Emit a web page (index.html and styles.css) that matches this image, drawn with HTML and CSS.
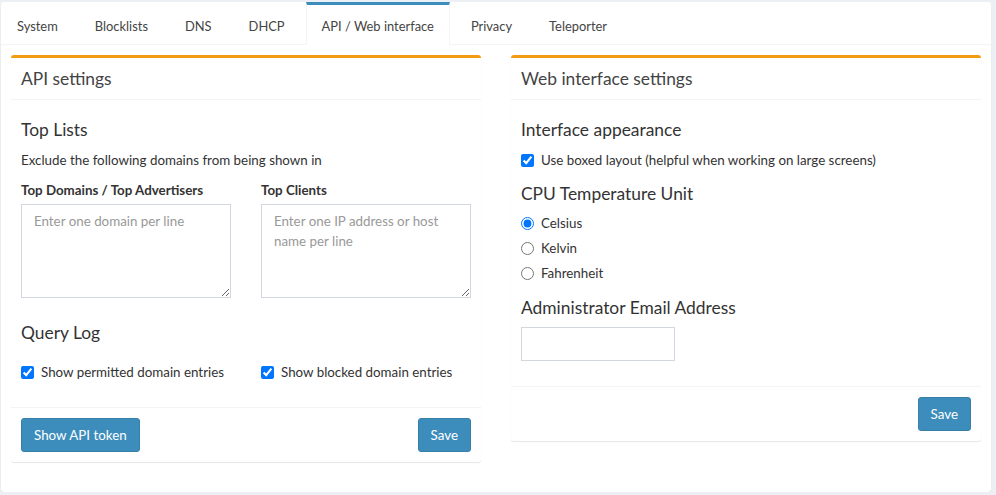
FILE: index.html
```html
<!DOCTYPE html>
<html>
<head>
<meta charset="utf-8">
<link rel="stylesheet" href="styles.css">
</head>
<body>
<div class="tabs-box">
  <ul class="tabs">
    <li class="tab"><a>System</a></li>
    <li class="tab"><a>Blocklists</a></li>
    <li class="tab"><a>DNS</a></li>
    <li class="tab"><a>DHCP</a></li>
    <li class="tab active"><a>API / Web interface</a></li>
    <li class="tab"><a>Privacy</a></li>
    <li class="tab"><a>Teleporter</a></li>
  </ul>
  <div class="tab-content">
    <div class="box">
      <div class="box-header"><h3 class="box-title">API settings</h3></div>
      <div class="box-body left-body">
        <h4 class="sub">Top Lists</h4>
        <p class="desc">Exclude the following domains from being shown in</p>
        <div class="two-col">
          <div>
            <label class="field-label">Top Domains / Top Advertisers</label>
            <textarea class="area" rows="4" placeholder="Enter one domain per line"></textarea>
          </div>
          <div>
            <label class="field-label">Top Clients</label>
            <textarea class="area" rows="4" placeholder="Enter one IP address or host name per line"></textarea>
          </div>
        </div>
        <h4 class="sub query">Query Log</h4>
        <div class="two-col checks">
          <label class="check"><input type="checkbox" checked><span>Show permitted domain entries</span></label>
          <label class="check"><input type="checkbox" checked><span>Show blocked domain entries</span></label>
        </div>
      </div>
      <div class="box-footer split">
        <button class="btn">Show API token</button>
        <button class="btn">Save</button>
      </div>
    </div>
    <div class="box">
      <div class="box-header"><h3 class="box-title">Web interface settings</h3></div>
      <div class="box-body right-body">
        <h4 class="sub">Interface appearance</h4>
        <label class="check"><input type="checkbox" checked><span>Use boxed layout (helpful when working on large screens)</span></label>
        <h4 class="sub cpu">CPU Temperature Unit</h4>
        <div class="radios">
          <label class="check"><input type="radio" name="t" checked><span>Celsius</span></label>
          <label class="check"><input type="radio" name="t"><span>Kelvin</span></label>
          <label class="check"><input type="radio" name="t"><span>Fahrenheit</span></label>
        </div>
        <h4 class="sub admin">Administrator Email Address</h4>
        <input class="email" type="email">
      </div>
      <div class="box-footer end">
        <button class="btn">Save</button>
      </div>
    </div>
  </div>
</div>
</body>
</html>
```
FILE: styles.css
```css
* { box-sizing: border-box; }
html, body { margin: 0; padding: 0; }
body {
  background: #ecf0f5;
  font-family: "Lato", "Liberation Sans", sans-serif;
  font-size: 13.35px;
  line-height: 20px;
  color: #333;
  padding: 2px 0 0 1px;
}
.tabs-box {
  width: 990px;
  background: #fff;
  border-radius: 3px;
  box-shadow: 0 1px 1px rgba(0,0,0,0.1);
}
.tabs {
  list-style: none;
  margin: 0;
  padding: 0;
  display: flex;
  border-bottom: 1px solid #f4f4f4;
}
.tab {
  margin-right: 5px;
  margin-bottom: -1px;
  border-top: 3px solid transparent;
  border-left: 1px solid transparent;
  border-right: 1px solid transparent;
}
.tab a {
  display: block;
  padding: 11px 15px 9px;
  color: #444;
  font-size: 12.9px;
}
.tab.active {
  border-top-color: #3c8dbc;
  border-left-color: #f4f4f4;
  border-right-color: #f4f4f4;
  background: #fff;
}
.tab-content {
  padding: 10px;
  display: grid;
  grid-template-columns: 470px 470px;
  column-gap: 30px;
  align-items: start;
}
.box {
  background: #fff;
  border-top: 3px solid #f39c12;
  border-radius: 3px;
  box-shadow: 0 1px 1px rgba(0,0,0,0.1);
  margin-bottom: 20px;
}
.box-header {
  padding: 10px;
  border-bottom: 1px solid #f4f4f4;
}
.box-title {
  margin: 0;
  font-size: 17.4px;
  font-weight: normal;
  line-height: 20px;
  color: #444;
  padding-top: 1px;
}
.box-body { padding: 10px; }
.sub {
  margin: 10px 0 10px;
  font-size: 17.4px;
  font-weight: normal;
  line-height: 20px;
  color: #333;
}
.desc { margin: 0 0 10px; }
.two-col {
  display: grid;
  grid-template-columns: 210px 210px;
  column-gap: 30px;
}
.field-label {
  display: block;
  font-weight: bold;
  margin-bottom: 4px;
}
.area {
  display: block;
  width: 210px;
  height: 94px;
  border: 1px solid #d2d6de;
  border-radius: 0;
  padding: 6px 12px;
  font-family: inherit;
  font-size: 13.35px;
  line-height: 20px;
  color: #555;
  resize: vertical;
}
.area::placeholder { color: #999; }
.query { margin-top: 25px; }
.checks { margin-top: 19px; margin-bottom: 15px; }
.check {
  display: flex;
  align-items: center;
  gap: 7px;
  line-height: 20px;
  white-space: nowrap;
}
.check input {
  margin: 0;
  width: 13px;
  height: 13px;
  flex: none;
}
.cpu { margin-top: 14px; margin-bottom: 9px; }
.radios { display: flex; flex-direction: column; gap: 5px; }
.admin { margin-top: 15px; margin-bottom: 9px; }
.email {
  display: block;
  width: 154px;
  height: 34px;
  border: 1px solid #d2d6de;
  border-radius: 0;
  margin-bottom: 15px;
}
.box-footer {
  border-top: 1px solid #f4f4f4;
  padding: 10px;
  display: flex;
}
.split { justify-content: space-between; }
.end { justify-content: flex-end; }
.btn {
  background: #3c8dbc;
  border: 1px solid #367fa9;
  border-radius: 3px;
  color: #fff;
  font-family: inherit;
  font-size: 13.35px;
  line-height: 20px;
  padding: 6px 12px;
}
```
